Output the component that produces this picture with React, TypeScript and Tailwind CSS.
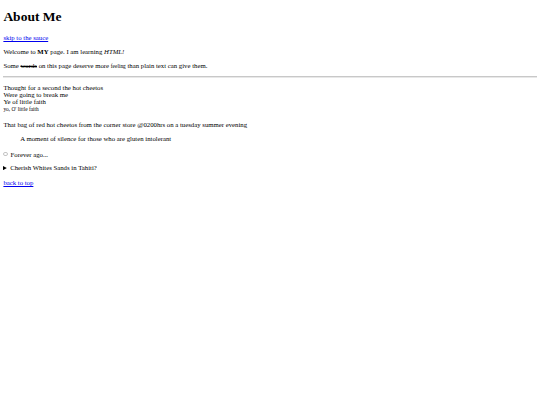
import React from 'react';

// Plain, browser-default looking page, photographed at 1280px and scaled to fit 540px
const App: React.FC = () => {
  return (
    <div className="[zoom:0.421875] bg-white min-h-[960px]">
      <div id="top" className="m-2 font-['Liberation_Serif',serif] text-[16px] leading-[normal] text-black">
        <h1 className="text-[32px] font-bold my-[21.44px]">About Me</h1>

        <p className="my-4">
          <a href="#sauce" className="text-[#0000ee] underline">skip to the sauce</a>
        </p>

        <p className="my-4">
          Welcome to <b>MY</b> page. I am learning <i>HTML!</i>
        </p>

        <p className="my-4">
          Some <s>words</s> on this page deserve more <small>feeling</small> than plain text can give them.
        </p>

        <hr className="mt-[17px] mb-2 h-0 border-t-2 border-b-2 border-t-[#c8c8c8] border-b-[#e8e8e8] border-x-0" />

        <p className="my-4">
          Thought for a second the hot cheetos
          <br />
          Were going to break me
          <br />
          Ye of little faith
          <br />
          <small>yo, O' little faith</small>
        </p>

        <p id="sauce" className="mt-[19px] mb-4">
          That bag of red hot cheetos from the corner store @0200hrs on a tuesday summer evening
        </p>

        <blockquote className="mt-[18px] mb-4 mx-10">
          A moment of silence for those who are gluten intolerant
        </blockquote>

        <p className="mt-[20px] mb-4 flex items-center">
          <span className="inline-block w-[11px] h-[11px] rounded-full border border-[#c4c4c4] mr-[6px]" />
          <span>Forever ago...</span>
        </p>

        <details className="mt-[16px] mb-4">
          <summary className="list-none flex items-center cursor-pointer">
            <svg width="9" height="10" viewBox="0 0 9 10" className="mr-[7px]">
              <path d="M0 0 L9 5 L0 10 Z" fill="#000" />
            </svg>
            <span>Cherish Whites Sands in Tahiti?</span>
          </summary>
        </details>

        <p className="mt-[19px] mb-4">
          <a href="#top" className="text-[#0000ee] underline">back to top</a>
        </p>
      </div>
    </div>
  );
};

export default App;
